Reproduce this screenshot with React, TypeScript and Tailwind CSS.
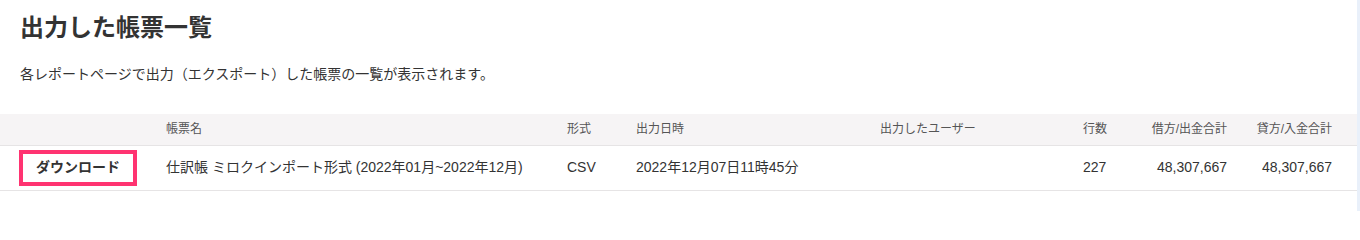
const rows = [
  {
    name: "仕訳帳 ミロクインポート形式 (2022年01月~2022年12月)",
    format: "CSV",
    exportedAt: "2022年12月07日11時45分",
    user: "",
    lines: 227,
    debit: "48,307,667",
    credit: "48,307,667",
  },
];

export default function App() {
  return (
    <div className="flex h-[211px] w-full bg-white font-['Liberation_Sans','Noto_Sans_CJK_JP',sans-serif] text-[#333]">
      <div className="flex-1 pt-[10px]">
        <h1 className="px-5 text-[24px] font-bold leading-[36px]">出力した帳票一覧</h1>
        <p className="mt-[18px] px-5 text-[14px] leading-[21px]">
          各レポートページで出力（エクスポート）した帳票の一覧が表示されます。
        </p>
        <table className="mt-[29px] w-full table-fixed border-collapse">
          <colgroup>
            <col className="w-[150px]" />
            <col className="w-[401px]" />
            <col className="w-[69px]" />
            <col className="w-[244px]" />
            <col className="w-[203px]" />
            <col className="w-[55px]" />
            <col className="w-[115px]" />
            <col className="w-[120px]" />
          </colgroup>
          <thead>
            <tr className="h-[31px] border-b border-[#e6e4e5] bg-[#f6f4f5] text-left text-[12px] text-[#555]">
              <th className="font-normal" />
              <th className="pl-4 font-normal">帳票名</th>
              <th className="pl-4 font-normal">形式</th>
              <th className="pl-4 font-normal">出力日時</th>
              <th className="pl-4 font-normal">出力したユーザー</th>
              <th className="pl-4 font-normal">行数</th>
              <th className="pr-[10px] text-right font-normal">借方/出金合計</th>
              <th className="pr-[25px] text-right font-normal">貸方/入金合計</th>
            </tr>
          </thead>
          <tbody>
            {rows.map((row) => (
              <tr key={row.name} className="h-[45px] border-b border-[#e6e4e5] text-[14px]">
                <td className="pl-[19px]">
                  <button className="flex h-[36px] w-[118px] items-center justify-center border-[4px] border-[#ff3371] bg-white text-[14px] font-bold text-[#333]">
                    ダウンロード
                  </button>
                </td>
                <td className="truncate pl-4">{row.name}</td>
                <td className="pl-4">{row.format}</td>
                <td className="pl-4">{row.exportedAt}</td>
                <td className="pl-4">{row.user}</td>
                <td className="pl-4">{row.lines}</td>
                <td className="pr-[10px] text-right">{row.debit}</td>
                <td className="pr-[25px] text-right">{row.credit}</td>
              </tr>
            ))}
          </tbody>
        </table>
      </div>
      <div className="w-[3px] bg-[#e9f0fa]" />
    </div>
  );
}
